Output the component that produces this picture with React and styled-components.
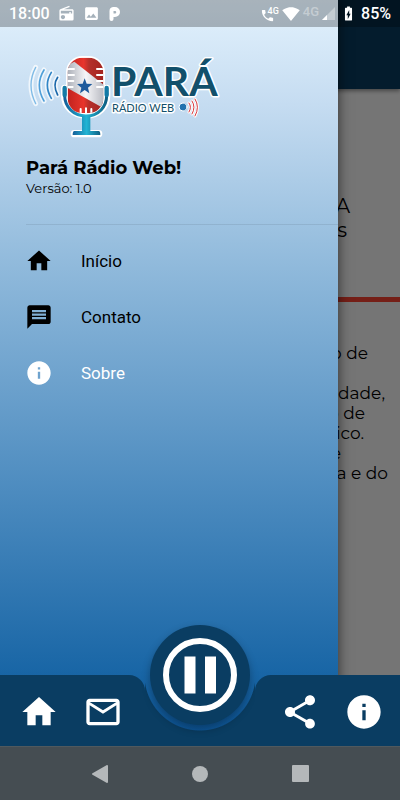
import React from 'react'
import styled, { createGlobalStyle, css } from 'styled-components'
import {
  MdBatteryChargingFull,
  MdHome,
  MdImage,
  MdInfo,
  MdMailOutline,
  MdMessage,
  MdPhone,
  MdRadio,
  MdShare,
  MdSignalWifi4Bar,
} from 'react-icons/md'

const navy = '#0a3d62'

const GlobalStyle = createGlobalStyle`
  * {
    box-sizing: border-box;
  }

  body {
    margin: 0;
    font-family: Montserrat, Inter, sans-serif;
  }
`

const Screen = styled.div`
  display: flex;
  flex-direction: column;
  min-height: 100vh;
`

// page, scrim, drawer and bars are stacked in one grid cell
const Stack = styled.div`
  display: grid;
  flex: 1;
  grid-template-columns: minmax(0, 1fr);
  overflow: hidden;

  > * {
    grid-area: 1 / 1;
  }
`

const StatusBar = styled.header`
  display: flex;
  align-items: center;
  align-self: start;
  z-index: 4;
  height: 27px;
  padding: 0 9px;
  background: rgba(0, 0, 0, 0.26);
  color: #fff;
  font: 500 16px/27px Roboto, sans-serif;
`

const StatusGroup = styled.div`
  display: flex;
  align-items: center;
  gap: ${props => props.$gap}px;
  margin-left: ${props => props.$start};

  svg {
    display: block;
  }
`

const Network = styled.span`
  padding-bottom: 4px;
  font-size: 13px;
  line-height: 16px;
  opacity: 0.35;
`

const CallIcon = styled.span`
  display: flex;
  align-items: flex-start;
  font-size: 9px;
  line-height: 12px;

  svg {
    margin: 3px -7px 0 0;
  }
`

const Page = styled.main`
  background: #fff;
  color: #000;
`

const PageHeader = styled.div`
  height: 89px;
  background: ${navy};
  box-shadow: 0 2px 4px rgba(0, 0, 0, 0.4);
`

const PageTitle = styled.h2`
  height: 208px;
  margin: 0;
  padding-top: 105px;
  font-size: 20px;
  font-weight: 400;
  line-height: 24px;
`

const PageText = styled.div`
  padding-top: 41px;
  border-top: 5px solid #ff4433;
  font-size: 17px;
  line-height: 20px;
`

const Line = styled.span`
  display: block;
  min-height: 20px;
  padding-right: ${props => props.$rest}px;
  text-align: right;
`

const Scrim = styled.div`
  z-index: 1;
  background: rgba(0, 0, 0, 0.54);
`

const Drawer = styled.aside`
  z-index: 2;
  margin-right: 62px;
  padding: 45px 0 0 26px;
  background: linear-gradient(#e3f2fd, #c5dcf1 14%, #8fb9db 36%, #4c8bbf 66%, #1966a6 90%, #0a5294);
  box-shadow: 0 0 12px rgba(0, 0, 0, 0.6);
`

const LogoSvg = styled.svg`
  display: block;
  width: 204px;
  height: 100px;
`

const AppName = styled.h1`
  margin: 11px 0 0;
  font-size: 18px;
  font-weight: 700;
  line-height: 24px;
`

const Version = styled.p`
  margin: 0 0 28px;
  font-size: 13px;
  line-height: 16px;
`

const Menu = styled.nav`
  padding-top: 8px;
  border-top: 1px solid rgba(0, 0, 0, 0.08);
`

const MenuLink = styled.a`
  display: flex;
  align-items: center;
  gap: 28px;
  height: 56px;
  margin-left: -1px;
  color: #000;
  font: 400 17px/24px Roboto, sans-serif;
  text-decoration: none;

  ${props => props.$active && css`
    color: #fff;
  `}
`

const BottomBar = styled.nav`
  display: grid;
  grid-template-columns: 1fr 110px 1fr;
  align-self: end;
  z-index: 3;
  height: 71px;
`

const Side = styled.div`
  display: flex;
  align-items: center;
  padding-top: 3px;
  background: ${navy};

  ${props => props.$left ? css`
    justify-content: flex-end;
    padding-right: 10px;
    border-top-right-radius: 16px;
  ` : css`
    padding-left: 13px;
    border-top-left-radius: 16px;
  `}
`

const Notch = styled.div`
  background: radial-gradient(circle at 50% 0, transparent 55px, ${navy} 56px);
`

const IconButton = styled.button`
  display: flex;
  align-items: center;
  justify-content: center;
  width: 64px;
  height: 64px;
  padding: 0;
  border: 0;
  background: none;
  color: #fff;
`

const PlayButton = styled(IconButton)`
  width: 100px;
  height: 100px;
  margin: -50px auto 0;
  border-radius: 50%;
  background: ${navy};
  box-shadow: 0 4px 8px rgba(0, 0, 0, 0.3);
`

const SystemBar = styled.footer`
  display: flex;
  justify-content: center;
  height: 54px;
  border-top: 1px solid #50595e;
  background: #454d52;
`

const SystemButton = styled(IconButton)`
  width: 100px;
  height: 53px;
  color: #b4b8ba;
`

const Logo = () => (
  <LogoSvg viewBox="6 0 204 100" role="img" aria-label="Pará Rádio Web">
    <defs>
      <linearGradient id="stand" x1="0" x2="1">
        <stop offset="0" stopColor="#14609a" />
        <stop offset="0.5" stopColor="#22b4d4" />
        <stop offset="1" stopColor="#0d5f83" />
      </linearGradient>
      <linearGradient id="flag" x1="0" x2="1">
        <stop offset="0" stopColor="#c2231f" />
        <stop offset="0.45" stopColor="#e8352c" />
        <stop offset="0.6" stopColor="#b5302a" />
        <stop offset="1" stopColor="#a3241f" />
      </linearGradient>
      <linearGradient id="band" x1="0" x2="1">
        <stop offset="0" stopColor="#a9adb6" />
        <stop offset="0.5" stopColor="#f6f6f8" />
        <stop offset="1" stopColor="#b4b6be" />
      </linearGradient>
      <clipPath id="head">
        <rect x="143" y="38" width="107" height="166" rx="44" />
      </clipPath>
    </defs>
    <g transform="scale(0.333333)" fill="none" strokeLinecap="round">
      <g stroke="#fff" strokeWidth="15" opacity="0.7">
        <path d="M47 67Q19 120 47 176M72 75Q44 120 72 168M94 82Q70 120 94 160M113 97Q97 120 113 150" />
      </g>
      <path d="M47 67Q19 120 47 176" stroke="#7fbbe6" strokeWidth="4" />
      <path d="M72 75Q44 120 72 168" stroke="#4f9fd8" strokeWidth="5" />
      <path d="M94 82Q70 120 94 160" stroke="#3185c6" strokeWidth="5" />
      <path d="M113 97Q97 120 113 150" stroke="#1a67aa" strokeWidth="5" />

      <g stroke="#fff" strokeWidth="22" strokeLinejoin="round">
        <path d="M134 130V151C134 185 160 210 198 210S260 185 260 151V130M198 212V264M163 266H236" />
        <rect x="143" y="38" width="107" height="166" rx="44" fill="#fff" strokeWidth="10" />
      </g>
      <path d="M134 144V151C134 185 160 213 198 213S260 185 260 151V144" stroke="url(#stand)" strokeWidth="9" />
      <path d="M134 129V150M260 129V150" stroke="#147aa5" strokeWidth="13" />
      <path d="M186 213H211V258H236Q241 258 241 270H158Q158 258 163 258H186Z" fill="url(#stand)" />
      <g clipPath="url(#head)">
        <rect x="143" y="38" width="107" height="166" fill="url(#flag)" />
        <path d="M140 62L163 50L255 122V192L140 128Z" fill="url(#band)" />
        <path d="M194 100l6 16 17 1-13 11 4 17-14-10-14 10 4-17-13-11 17-1z" fill="#1d5a9c" />
        <g stroke="#fff" strokeWidth="6">
          <path d="M140 72H162M140 90H162M140 108H160M140 126H158" />
          <path d="M253 72H231M253 90H231M253 108H231M253 126H231" />
          <path d="M182 206V192M198 206V190M214 206V192" />
        </g>
      </g>
    </g>
    <text
      fill="#12506b"
      stroke="#fff"
      strokeWidth="3"
      strokeLinejoin="round"
      paintOrder="stroke"
      fontFamily="Lato, sans-serif"
      fontSize="11"
    >
      <tspan x="91" y="51" fontSize="41" fontWeight="700">PARÁ</tspan>
      <tspan x="92" y="67">RÁDIO WEB</tspan>
    </text>
    <g fill="none" strokeLinecap="round">
      <circle cx="163" cy="62" r="4" fill="#2272ae" stroke="#fff" />
      <path d="M169 58Q172 62 169 67M172 56Q176 62 172 69M175 54Q180 62 175 71" stroke="#fff" strokeWidth="3" />
      <path d="M169 58Q172 62 169 67M172 56Q176 62 172 69M175 54Q180 62 175 71" stroke="#d8383c" />
    </g>
  </LogoSvg>
)

const menu = [
  { label: 'Início', href: '#inicio', icon: MdHome },
  { label: 'Contato', href: '#contato', icon: MdMessage },
  { label: 'Sobre', href: '#sobre', icon: MdInfo, active: true },
]

const lines = [
  { text: 'o de', rest: 32 },
  { text: '', rest: 0 },
  { text: 'dade,', rest: 15 },
  { text: 'o de', rest: 35 },
  { text: 'ico.', rest: 36 },
  { text: 'e', rest: 59 },
  { text: 'a e do', rest: 12 },
]

const App = () => (
  <Screen>
    <GlobalStyle />
    <Stack>
      <StatusBar>
        <span>18:00</span>
        <StatusGroup $start="8px" $gap={8}>
          <MdRadio size={17} />
          <MdImage size={17} />
          <svg width="12" height="14" viewBox="0 0 12 14">
            <path
              d="M5 0H7a5 5 0 0 1 0 10H5.500V12a2 2 0 0 1-4 0V4A4 4 0 0 1 5 0zM5.500 4V6.500H7a1 1 0 0 0 0-2.500z"
              fill="currentColor"
              fillRule="evenodd"
            />
          </svg>
        </StatusGroup>
        <StatusGroup $start="auto" $gap={3}>
          <CallIcon>
            <MdPhone size={15} />
            4G
          </CallIcon>
          <MdSignalWifi4Bar size={18} />
          <Network>4G</Network>
          <svg width="13" height="13" viewBox="0 0 13 13">
            <path d="M13 0V13H0z" fill="#fff" opacity="0.35" />
            <path d="M5 8V13H0z" fill="#fff" />
          </svg>
        </StatusGroup>
        <StatusGroup $start="5px" $gap={4}>
          <MdBatteryChargingFull size={17} />
          <span>85%</span>
        </StatusGroup>
      </StatusBar>

      <Page>
        <PageHeader />
        <PageTitle>
          <Line $rest={50}>A</Line>
          <Line $rest={53}>s</Line>
        </PageTitle>
        <PageText>
          {lines.map((line, idx) => (
            <Line key={idx} $rest={line.rest}>{line.text}</Line>
          ))}
        </PageText>
      </Page>
      <Scrim />

      <Drawer>
        <Logo />
        <AppName>Pará Rádio Web!</AppName>
        <Version>Versão: 1.0</Version>
        <Menu>
          {menu.map(({ label, href, icon: Icon, active }) => (
            <MenuLink key={label} href={href} $active={active}>
              <Icon size={28} />
              {label}
            </MenuLink>
          ))}
        </Menu>
      </Drawer>

      <BottomBar>
        <Side $left>
          <IconButton aria-label="Início"><MdHome size={40} /></IconButton>
          <IconButton aria-label="Contato"><MdMailOutline size={40} /></IconButton>
        </Side>
        <Notch>
          <PlayButton aria-label="Pausar">
            <svg width="74" height="74" viewBox="0 0 74 74">
              <circle cx="37" cy="37" r="34" fill="none" stroke="#fff" strokeWidth="6" />
              <path d="M21.500 18.500h11v37h-11zM42 18.500h11v37H42z" fill="#fff" />
            </svg>
          </PlayButton>
        </Notch>
        <Side>
          <IconButton aria-label="Compartilhar"><MdShare size={40} /></IconButton>
          <IconButton aria-label="Sobre"><MdInfo size={40} /></IconButton>
        </Side>
      </BottomBar>
    </Stack>

    <SystemBar>
      <SystemButton aria-label="Voltar">
        <svg width="16" height="18" viewBox="0 0 16 18">
          <path d="M15 1V17L1 9z" fill="currentColor" stroke="currentColor" strokeWidth="2" strokeLinejoin="round" />
        </svg>
      </SystemButton>
      <SystemButton aria-label="Tela inicial">
        <svg width="16" height="16" viewBox="0 0 16 16">
          <circle cx="8" cy="8" r="8" fill="currentColor" />
        </svg>
      </SystemButton>
      <SystemButton aria-label="Recentes">
        <svg width="17" height="17" viewBox="0 0 17 17">
          <rect width="17" height="17" rx="1" fill="currentColor" />
        </svg>
      </SystemButton>
    </SystemBar>
  </Screen>
)

export default App
